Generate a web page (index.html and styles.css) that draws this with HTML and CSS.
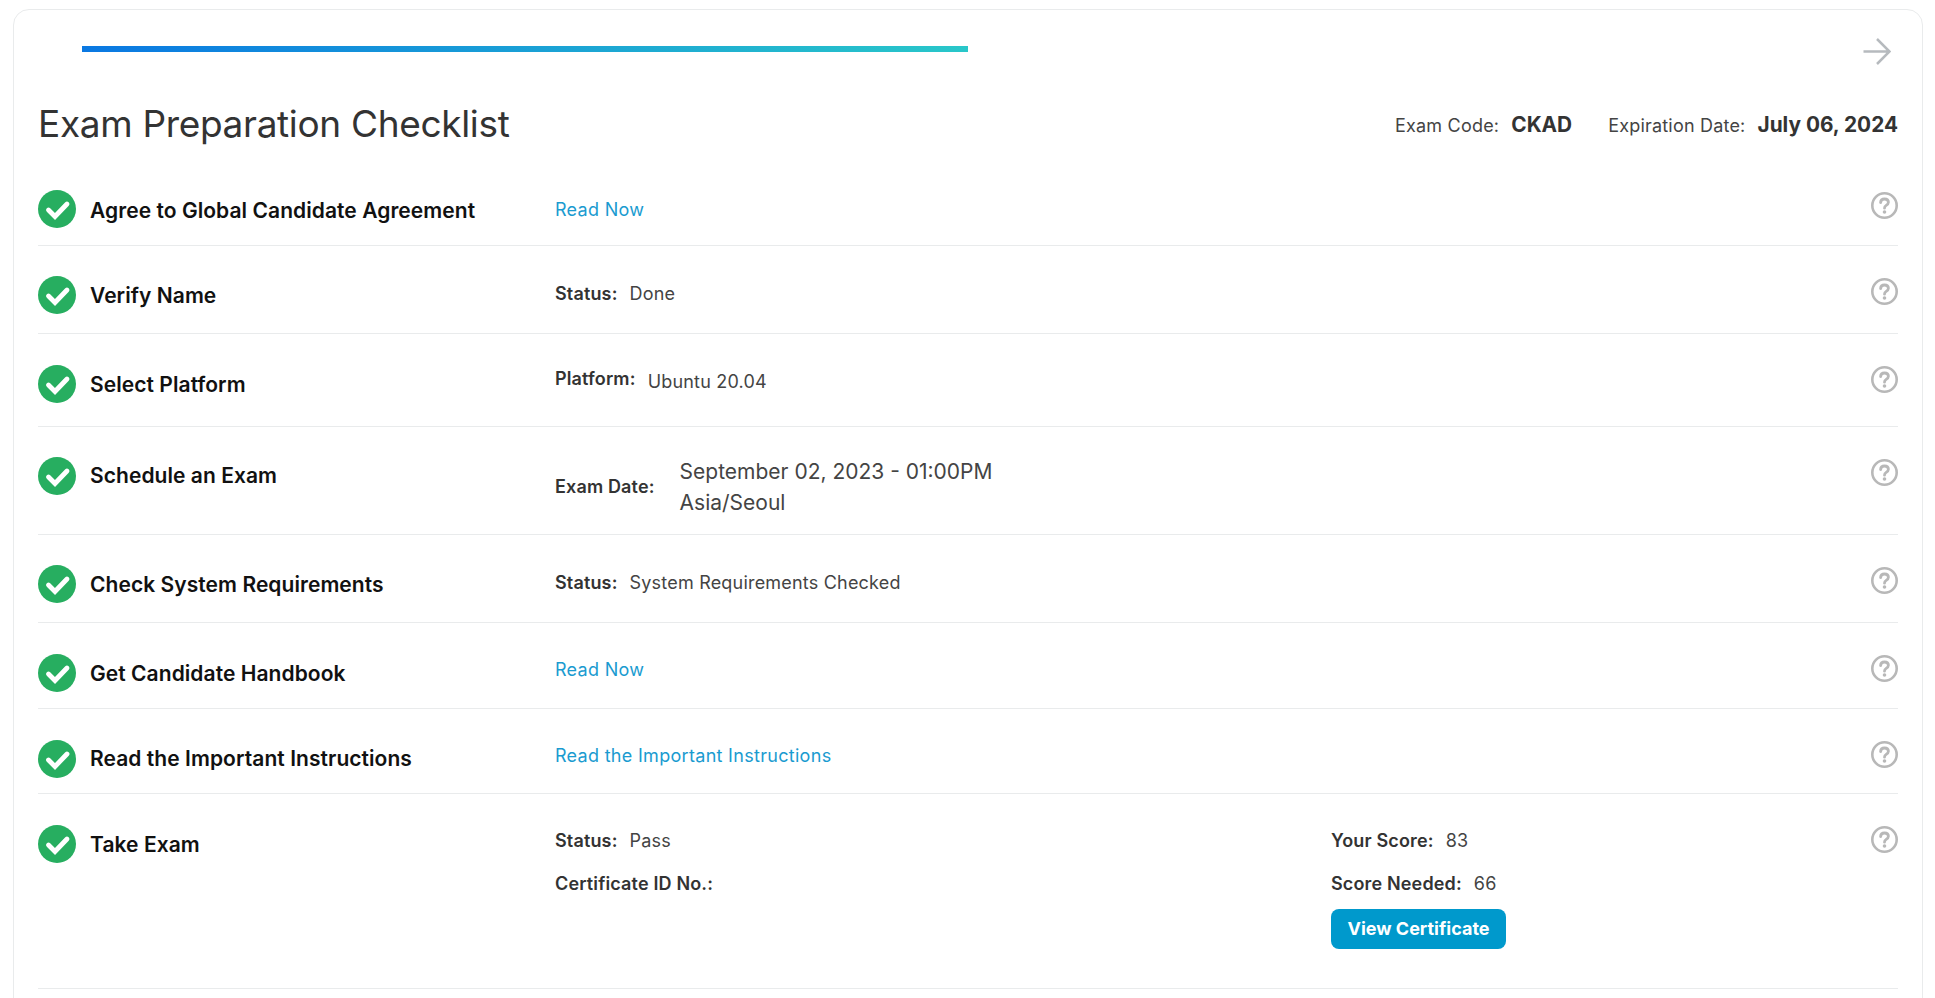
FILE: index.html
```html
<!DOCTYPE html>
<html lang="en">
<head>
<meta charset="utf-8">
<title>Exam Preparation Checklist</title>
<link rel="stylesheet" href="styles.css">
</head>
<body>
<svg class="defs" width="0" height="0" aria-hidden="true">
  <symbol id="check" viewBox="0 0 38 38">
    <circle cx="19" cy="19" r="19" fill="#27ae60"/>
    <path d="M10.5 20 L17 26.5 L29 14" fill="none" stroke="#fff" stroke-width="4.8" stroke-linecap="round" stroke-linejoin="miter"/>
  </symbol>
  <symbol id="help" viewBox="0 0 27 27">
    <circle cx="13.5" cy="13.5" r="12.2" fill="none" stroke="#b8b8b8" stroke-width="2.6"/>
    <path d="M9.6 10.6 C9.7 8.2 11.3 7 13.5 7 C15.8 7 17.4 8.4 17.4 10.3 C17.4 12 16.3 12.7 15.2 13.4 C14.1 14.1 13.5 14.7 13.5 16.2" fill="none" stroke="#b8b8b8" stroke-width="2.8" stroke-linecap="round"/>
    <circle cx="13.5" cy="20" r="1.8" fill="#b8b8b8"/>
  </symbol>
</svg>
<main class="card">
  <div class="top">
    <div class="progress"></div>
    <svg class="arrow" width="28" height="27" viewBox="0 0 28 27"><path d="M0.5 13.5 H26 M14 1 L26.5 13.5 L14 26" fill="none" stroke="#b6babe" stroke-width="2.5"/></svg>
  </div>
  <header class="head">
    <h1 class="title">Exam Preparation Checklist</h1>
    <div class="meta">
      <span class="meta-label">Exam Code:</span><strong class="meta-value">CKAD</strong>
      <span class="meta-label meta-gap">Expiration Date:</span><strong class="meta-value">July 06, 2024</strong>
    </div>
  </header>

  <section class="row r1">
    <svg class="tick"><use href="#check"/></svg>
    <div class="name">Agree to Global Candidate Agreement</div>
    <div class="info"><a class="link" href="#">Read Now</a></div>
    <svg class="help"><use href="#help"/></svg>
  </section>
  <section class="row r2">
    <svg class="tick"><use href="#check"/></svg>
    <div class="name">Verify Name</div>
    <div class="info"><span class="k">Status:</span><span class="v">Done</span></div>
    <svg class="help"><use href="#help"/></svg>
  </section>
  <section class="row r3">
    <svg class="tick"><use href="#check"/></svg>
    <div class="name">Select Platform</div>
    <div class="info platform"><span class="k">Platform:</span><span class="v">Ubuntu 20.04</span></div>
    <svg class="help"><use href="#help"/></svg>
  </section>
  <section class="row r4">
    <svg class="tick"><use href="#check"/></svg>
    <div class="name">Schedule an Exam</div>
    <div class="info date"><span class="k">Exam Date:</span><span class="when">September 02, 2023 - 01:00PM<br>Asia/Seoul</span></div>
    <svg class="help"><use href="#help"/></svg>
  </section>
  <section class="row r5">
    <svg class="tick"><use href="#check"/></svg>
    <div class="name">Check System Requirements</div>
    <div class="info"><span class="k">Status:</span><span class="v">System Requirements Checked</span></div>
    <svg class="help"><use href="#help"/></svg>
  </section>
  <section class="row r6">
    <svg class="tick"><use href="#check"/></svg>
    <div class="name">Get Candidate Handbook</div>
    <div class="info"><a class="link" href="#">Read Now</a></div>
    <svg class="help"><use href="#help"/></svg>
  </section>
  <section class="row r7">
    <svg class="tick"><use href="#check"/></svg>
    <div class="name">Read the Important Instructions</div>
    <div class="info"><a class="link" href="#">Read the Important Instructions</a></div>
    <svg class="help"><use href="#help"/></svg>
  </section>
  <section class="row r8">
    <svg class="tick"><use href="#check"/></svg>
    <div class="name">Take Exam</div>
    <div class="info exam">
      <div class="exam-col">
        <div><span class="k">Status:</span><span class="v">Pass</span></div>
        <div><span class="k">Certificate ID No.:</span></div>
      </div>
      <div class="exam-col">
        <div><span class="k">Your Score:</span><span class="v">83</span></div>
        <div><span class="k">Score Needed:</span><span class="v">66</span></div>
        <a class="btn" href="#">View Certificate</a>
      </div>
    </div>
    <svg class="help"><use href="#help"/></svg>
  </section>
</main>
</body>
</html>
```
FILE: styles.css
```css
* { box-sizing: border-box; }
html, body { margin: 0; height: 998px; overflow: hidden; background: #fff; }
body { padding: 9px 12px 0 13px; font-family: Inter, "Liberation Sans", sans-serif; color: #333; }
.defs { position: absolute; }
.card {
  height: 1100px;
  padding: 0 24px 0 24px;
  border: 1px solid #e9ebec;
  border-radius: 16px;
  background: #fff;
}
.top { display: flex; justify-content: space-between; align-items: flex-start; padding: 36px 7px 0 44px; height: 74px; }
.progress { width: 886px; height: 6px; background: linear-gradient(90deg, #0a78e2, #29c7c9); }
.arrow { margin-top: -8px; }
.head { display: flex; justify-content: space-between; align-items: center; height: 78px; padding-top: 1px; }
.title { margin: 0; font-size: 37px; font-weight: 400; line-height: 44px; color: #333; letter-spacing: -0.33px; }
.meta { display: flex; align-items: baseline; padding-top: 1px; }
.meta-label { font-size: 18px; margin-right: 12px; color: #444; letter-spacing: 0.2px; }
.meta-gap { margin-left: 36px; }
.meta-value { font-size: 20.8px; font-weight: 700; color: #333; }
.row {
  display: grid;
  grid-template-columns: 38px 479px 1fr 27px;
  align-items: start;
  border-bottom: 1px solid #e9ebec;
  padding-top: 30px;
}
.r1 { height: 84px; padding-top: 28px; }
.r2 { height: 88px; }
.r3 { height: 93px; }
.r4 { height: 108px; }
.r5 { height: 88px; }
.r6 { height: 86px; }
.r7 { height: 85px; }
.r8 { height: 195px; }
.tick { width: 38px; height: 38px; }
.r3 .tick, .r6 .tick, .r7 .tick, .r8 .tick { margin-top: 1px; }
.name { padding: 8px 0 0 14px; font-size: 21px; line-height: 24px; font-weight: 600; color: #111; letter-spacing: 0.06px; }
.r1 .name, .r3 .name, .r6 .name, .r8 .name { padding-top: 9px; }
.r4 .name { padding-top: 7px; }
.info { padding-top: 6px; font-size: 18px; line-height: 24px; letter-spacing: 0.3px; }
.r1 .info { padding-top: 8px; }
.r6 .info, .r7 .info, .r8 .info { padding-top: 5px; }
.r3 .info { padding-top: 3px; display: flex; align-items: flex-start; }
.r3 .v { margin-top: 3px; }
.help { width: 27px; height: 27px; margin-top: 2px; }
.k { font-weight: 600; color: #333; margin-right: 12px; letter-spacing: 0.15px; }
.v { font-weight: 400; color: #444; letter-spacing: 0.2px; }
.link { color: #1a9bd0; text-decoration: none; }
.date { display: flex; align-items: center; padding-top: 0; margin-top: -1px; }
.when { margin-left: 13px; font-size: 21px; line-height: 31px; color: #444; letter-spacing: 0; }
.exam { display: grid; grid-template-columns: 776px 1fr; }
.exam-col { display: flex; flex-direction: column; row-gap: 19px; align-items: flex-start; }
.btn {
  display: flex; align-items: center; justify-content: center;
  width: 175px; height: 40px; margin-top: -6px;
  background: #0099cc; border-radius: 8px;
  color: #fff; font-size: 18px; font-weight: 700; letter-spacing: 0; text-decoration: none;
}
```
